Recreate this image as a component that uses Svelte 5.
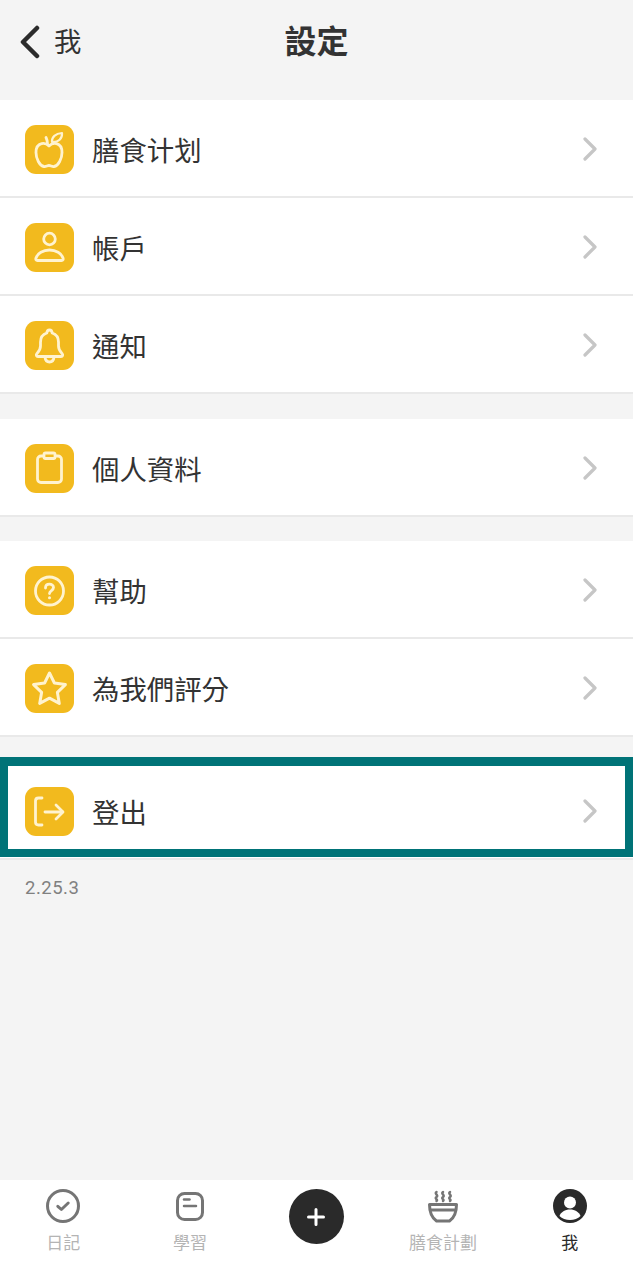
<script>
  const groups = [
    [
      { label: '膳食计划', icon: 'apple' },
      { label: '帳戶', icon: 'person' },
      { label: '通知', icon: 'bell' }
    ],
    [{ label: '個人資料', icon: 'clipboard' }],
    [
      { label: '幫助', icon: 'help' },
      { label: '為我們評分', icon: 'star' }
    ],
    [{ label: '登出', icon: 'logout', marked: true }]
  ];
</script>

{#snippet rowIcon(name)}
  <svg class="row-icon" viewBox="0 0 49 49" fill="none" stroke="#fff3cf" stroke-width="2.800" stroke-linecap="round" stroke-linejoin="round">
    {#if name === 'apple'}
      <path d="M24 21c-2-2-5-3-7.500-2.300-4 1-5.500 4.800-5.500 8.800 0 6 3.500 13.300 8 14 2 .3 3.300-1 5-1s3 1.300 5 1c4.500-.7 8-8 8-14 0-4-1.500-7.800-5.500-8.800-2.500-.7-5.500.3-7.500 2.300z" />
      <path d="M22.500 19c0-2.500-.5-4.500-1.500-6.500" />
      <path d="M27 17c-.5-5 3.500-8.500 10-9 .5 5.500-3.500 9.500-10 9z" stroke-width="2.200" />
    {:else if name === 'person'}
      <circle cx="24.500" cy="16" r="5.800" />
      <path d="M12.500 37.500c-1.500 0-2-1-1.500-2.500 1.500-4.500 7-8 13.500-8s12 3.500 13.500 8c.5 1.500 0 2.500-1.500 2.500z" />
    {:else if name === 'bell'}
      <path d="M24.500 9c-1.500 0-2.500 1-2.700 3-4.300 1.400-6.300 5-6.300 9v4c0 3-1.500 5.500-3.500 7.500-1.300 1.400-.7 3 1 3h23c1.700 0 2.300-1.600 1-3-2-2-3.500-4.500-3.500-7.500v-4c0-4-2-7.600-6.300-9-.2-2-1.200-3-2.700-3z" />
      <path d="M20 36c.3 3 2 5 4.500 5s4.200-2 4.500-5" />
    {:else if name === 'clipboard'}
      <rect x="12.500" y="12" width="24" height="26.500" rx="3.500" />
      <rect x="19" y="9" width="11" height="5.500" rx="1.500" fill="#f2ba1e" />
    {:else if name === 'help'}
      <circle cx="24.500" cy="25" r="14" />
      <path d="M20.500 22c0-2.500 1.800-3.800 4-3.800s4 1.400 4 3.400c0 3-4 3-4 6" stroke-width="2.800" />
      <circle cx="24.500" cy="31.800" r="1.500" fill="#fff3cf" stroke="none" />
    {:else if name === 'star'}
      <path d="M24.500 9l4.900 10 11 1.600-8 7.800 1.900 11-9.800-5.200-9.800 5.200 1.900-11-8-7.800 11-1.600z" stroke-width="3" />
    {:else if name === 'logout'}
      <path d="M17 11h-3.500c-2 0-3 1-3 3v21c0 2 1 3 3 3H17" />
      <path d="M20 25h17.500" />
      <path d="M31 18l7 7-7 7" />
    {/if}
  </svg>
{/snippet}

<div class="page">
  <header>
    <div class="back">
      <svg width="22" height="34" viewBox="0 0 22 34" fill="none" stroke="#2b2b2b" stroke-width="4.500" stroke-linecap="round" stroke-linejoin="round">
        <path d="M18 3L4 17l14 14" />
      </svg>
      <span>我</span>
    </div>
    <h1>設定</h1>
  </header>

  <main>
    {#each groups as group}
      <section>
        {#each group as item}
          <div class="row" class:marked={item.marked}>
            {@render rowIcon(item.icon)}
            <span class="label">{item.label}</span>
            <svg class="chevron" width="16" height="24" viewBox="0 0 16 24" fill="none" stroke="#c6c6c6" stroke-width="3.200" stroke-linecap="round" stroke-linejoin="round">
              <path d="M3 2l10 10L3 22" />
            </svg>
          </div>
        {/each}
      </section>
    {/each}
    <p class="version">2.25.3</p>
  </main>

  <nav>
    <div class="tab">
      <svg viewBox="0 0 34 34" fill="none" stroke="#757575" stroke-width="3" stroke-linecap="round" stroke-linejoin="round">
        <circle cx="17" cy="17" r="15.500" />
        <path d="M11.800 17.300l3.600 3.200 6.800-6.500" />
      </svg>
      <span>日記</span>
    </div>
    <div class="tab">
      <svg viewBox="0 0 34 34" fill="none" stroke="#757575" stroke-width="3" stroke-linecap="round" stroke-linejoin="round">
        <rect x="4.500" y="4.500" width="25" height="26" rx="7" />
        <path d="M11 10.500h5.500" stroke-width="2.500" />
        <path d="M11 17h12" stroke-width="2.500" />
      </svg>
      <span>學習</span>
    </div>
    <div class="tab">
      <button class="add" aria-label="add">
        <svg width="22" height="22" viewBox="0 0 22 22" fill="none" stroke="#fff" stroke-width="3" stroke-linecap="round">
          <path d="M11 3.500v15M3.500 11h15" />
        </svg>
      </button>
    </div>
    <div class="tab">
      <svg viewBox="0 0 34 34" fill="none" stroke="#757575" stroke-width="2.500" stroke-linecap="round" stroke-linejoin="round">
        <path d="M10.500 3c-2.500 1.500 2.500 3.500 0 5s2 2.500 0 4" />
        <path d="M17 3c-2.500 1.500 2.500 3.500 0 5s2 2.500 0 4" />
        <path d="M24 3c-2.500 1.500 2.500 3.500 0 5s2 2.500 0 4" />
        <path d="M3.500 15.500h27c0 7-2 13-7 16.500h-13C5.500 28.500 3.500 22.500 3.500 15.500z" stroke-width="3" />
        <path d="M4.500 21h25" stroke-width="3" />
      </svg>
      <span>膳食計劃</span>
    </div>
    <div class="tab active">
      <svg viewBox="0 0 34 34">
        <circle cx="17" cy="17" r="17" fill="#2a2a2a" />
        <circle cx="17" cy="13.500" r="6" fill="#fff" />
        <path d="M6.500 27c1.500-4 5.500-6.500 10.500-6.500s9 2.500 10.500 6.500c-2.500 2.700-6.400 4-10.500 4s-8-1.300-10.500-4z" fill="#fff" />
      </svg>
      <span>我</span>
    </div>
  </nav>
</div>

<style>
  :global(body) {
    background: #f4f4f4;
  }

  .page {
    width: 633px;
    height: 1280px;
    display: flex;
    flex-direction: column;
    background: #f4f4f4;
    color: #333;
    font-family: "Noto Sans CJK TC", "Liberation Sans", sans-serif;
  }

  header {
    height: 100px;
    box-sizing: border-box;
    padding-top: 25px;
    display: grid;
    grid-template-columns: 1fr auto 1fr;
    align-items: start;
  }

  .back {
    display: flex;
    align-items: center;
    gap: 13px;
    height: 34px;
    padding-left: 19px;
    font-size: 27.400px;
    line-height: 34px;
  }

  .back span {
    margin-top: -4px;
  }

  h1 {
    margin: -2px 0 0;
    font-size: 32px;
    line-height: 32px;
    font-weight: 700;
  }

  main {
    flex: 1;
  }

  section {
    margin-bottom: 25px;
    background: #fff;
  }

  section:nth-of-type(2) {
    margin-bottom: 24px;
  }

  .row {
    position: relative;
    height: 98px;
    box-sizing: border-box;
    padding: 2px 35px 0 25px;
    display: flex;
    align-items: center;
    border-bottom: 2px solid #e9e9e9;
  }

  .row.marked::after {
    content: "";
    position: absolute;
    left: 0;
    right: 0;
    top: -5px;
    height: 100px;
    box-sizing: border-box;
    border: solid #007377;
    border-width: 9px 8px 8px;
  }

  .row-icon {
    width: 49px;
    height: 49px;
    flex: none;
    border-radius: 11px;
    background: #f2ba1e;
  }

  .label {
    flex: 1;
    margin-left: 18px;
    font-size: 27.400px;
    line-height: 36px;
    color: #333;
  }

  .chevron {
    flex: none;
  }

  .version {
    margin: -1px 0 0 25px;
    font-size: 18.500px;
    line-height: 24px;
    letter-spacing: 0.5px;
    color: #808080;
    font-family: "Roboto", "Liberation Sans", sans-serif;
  }

  section:nth-of-type(4) {
    margin-bottom: 17px;
  }

  nav {
    height: 100px;
    flex: none;
    background: #fff;
    display: grid;
    grid-template-columns: repeat(5, 1fr);
  }

  .tab {
    padding-top: 9px;
    display: flex;
    flex-direction: column;
    align-items: center;
    font-size: 17px;
    line-height: 24px;
    color: #b4b4b4;
  }

  .tab > svg {
    width: 34px;
    height: 34px;
    margin-bottom: 7px;
  }

  .tab.active {
    color: #2a2a2a;
  }

  .add {
    width: 55px;
    height: 55px;
    padding: 0;
    border: 0;
    border-radius: 50%;
    background: #2a2a2a;
    display: flex;
    align-items: center;
    justify-content: center;
  }
</style>
